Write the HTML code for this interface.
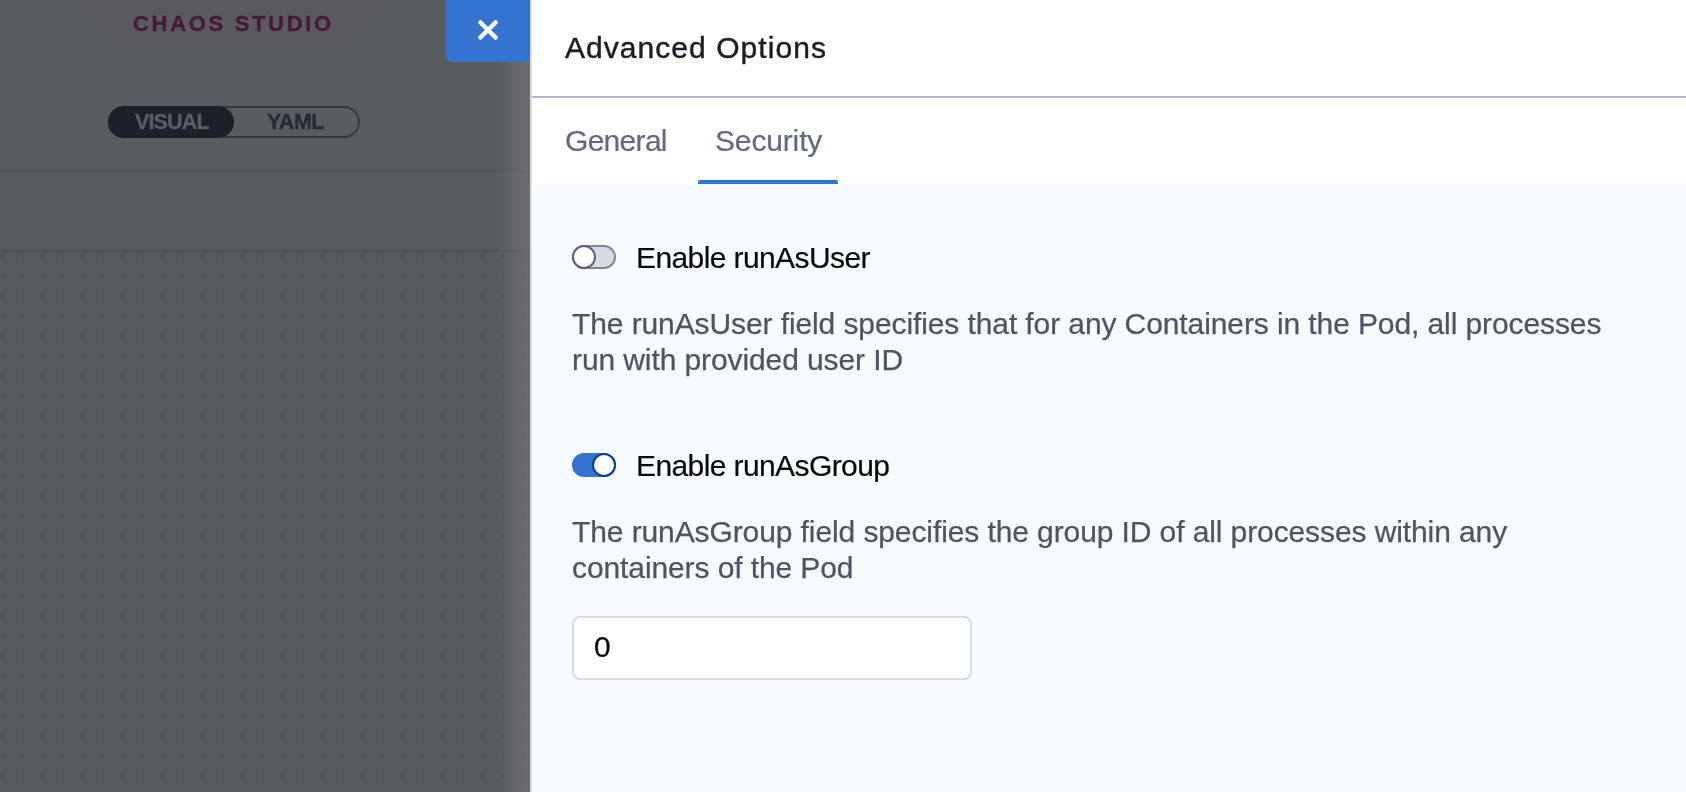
<!DOCTYPE html>
<html><head><meta charset="utf-8">
<style>
html,body{margin:0;padding:0;}
body{width:1686px;height:792px;overflow:hidden;position:relative;background:#585c5f;font-family:"Liberation Sans",sans-serif;}
.abs{position:absolute;}
.t{position:absolute;white-space:nowrap;line-height:1;will-change:transform;}
#left{left:0;top:0;width:530px;height:792px;background:#585c5f;overflow:hidden;}
#trap{left:69px;top:0;width:330px;height:46px;background:#5a595e;clip-path:polygon(0 0,100% 0,calc(100% - 46px) 100%,45.5px 100%);}
#chaos{left:133px;top:13.4px;font-size:22px;font-weight:bold;color:#461a34;letter-spacing:2.68px;-webkit-text-stroke:0.35px #461a34;}
#pill{left:108px;top:106px;width:252px;height:32px;box-sizing:border-box;border:2px solid #353844;border-radius:16px;}
#vis{left:108px;top:106px;width:126px;height:32px;background:#1d2029;border-radius:16px;}
#vist{left:134.5px;top:111.8px;font-size:21.5px;font-weight:bold;color:#5a5e62;letter-spacing:-0.85px;-webkit-text-stroke:0.3px #5a5e62;}
#yamlt{left:267px;top:111.8px;font-size:21.5px;font-weight:bold;color:#272a34;letter-spacing:-0.5px;-webkit-text-stroke:0.3px #272a34;}
#l1{left:0;top:170px;width:530px;height:2px;background:#505457;}
#canvas{left:0;top:250px;width:530px;height:542px;background-color:#56595d;}
#l2{left:0;top:250px;width:530px;height:2px;background:#4d5054;}
#shade{left:495px;top:0;width:35px;height:792px;background:linear-gradient(to right,rgba(112,112,114,0),rgba(112,112,114,0.85));}
#close{left:446px;top:-3px;width:84px;height:65px;background:#3473cf;border-radius:5px;}
#panel{left:530px;top:0;width:1156px;height:792px;background:#f7fbfe;}
#pborder{left:530px;top:0;width:2px;height:792px;background:#dcdcdc;}
#head{left:532px;top:0;width:1154px;height:96px;background:#fff;}
#hline{left:532px;top:96px;width:1154px;height:2px;background:#b3b4c9;}
#tabs{left:532px;top:98px;width:1154px;height:86px;background:#fff;}
#title{left:565px;top:32.6px;font-size:30px;color:#1c1d26;letter-spacing:1.05px;-webkit-text-stroke:0.45px #1c1d26;}
.tab{font-size:30px;color:#656882;-webkit-text-stroke:0.2px #656882;}
#ul{left:698px;top:180px;width:140px;height:4px;background:#3473cf;border-radius:2px 2px 0 0;}
.tog{position:absolute;width:44px;height:24px;box-sizing:border-box;border-radius:12px;}
.knob{position:absolute;width:24px;height:24px;box-sizing:border-box;border-radius:50%;background:#fff;}
.lab{font-size:30px;color:#0a0a0c;letter-spacing:-0.6px;-webkit-text-stroke:0.2px #0a0a0c;}
.desc{font-size:30px;color:#505265;letter-spacing:-0.1px;-webkit-text-stroke:0.25px #505265;}
#input{left:572px;top:616px;width:400px;height:64px;box-sizing:border-box;border:2px solid #d9dae5;border-radius:8px;background:#fff;}
</style></head>
<body>
<div id="left" class="abs">
  <div id="trap" class="abs"></div>
  <div id="chaos" class="t">CHAOS STUDIO</div>
  <div id="pill" class="abs"></div>
  <div id="vis" class="abs"></div>
  <div id="vist" class="t">VISUAL</div>
  <div id="yamlt" class="t">YAML</div>
  <div id="l1" class="abs"></div>
  <div id="canvas" class="abs"><svg width="530" height="542" style="position:absolute;left:0;top:0"><defs><pattern id="dots" x="2" y="5" width="20" height="20" patternUnits="userSpaceOnUse"><rect x="0" y="0" width="2" height="2" fill="#46494e"/></pattern></defs><rect x="0" y="0" width="530" height="542" fill="url(#dots)"/></svg></div>
  <div id="l2" class="abs"></div>
  <div id="shade" class="abs"></div>
</div>
<div id="close" class="abs">
  <svg class="abs" style="left:32px;top:23px" width="20" height="20" viewBox="0 0 20 20"><path d="M2.4 2.4L17.6 17.6M17.6 2.4L2.4 17.6" stroke="#fff" stroke-width="4.3" stroke-linecap="round"/></svg>
</div>
<div id="panel" class="abs"></div>
<div id="pborder" class="abs"></div>
<div id="head" class="abs"></div>
<div id="hline" class="abs"></div>
<div id="tabs" class="abs"></div>
<div id="title" class="t">Advanced Options</div>
<div class="t tab" style="left:565px;top:125.5px;letter-spacing:-0.7px">General</div>
<div class="t tab" style="left:715px;top:125.5px;letter-spacing:-0.15px">Security</div>
<div id="ul" class="abs"></div>

<div class="tog" style="left:572px;top:245px;background:#d9dae6;border:2px solid #82849b;"></div>
<div class="knob" style="left:572px;top:245px;border:2px solid #5d5f75;"></div>
<div class="t lab" style="left:636px;top:242.6px">Enable runAsUser</div>
<div class="t desc" style="left:572px;top:308.6px">The runAsUser field specifies that for any Containers in the Pod, all processes</div>
<div class="t desc" style="left:572px;top:344.6px">run with provided user ID</div>

<div class="tog" style="left:572px;top:453px;background:#3473cf;"></div>
<div class="knob" style="left:592px;top:453px;border:2px solid #0d3ba3;"></div>
<div class="t lab" style="left:636px;top:450.6px">Enable runAsGroup</div>
<div class="t desc" style="left:572px;top:516.6px">The runAsGroup field specifies the group ID of all processes within any</div>
<div class="t desc" style="left:572px;top:552.6px">containers of the Pod</div>

<div id="input" class="abs"></div>
<div class="t lab" style="left:594px;top:632.4px;letter-spacing:0">0</div>
</body></html>
